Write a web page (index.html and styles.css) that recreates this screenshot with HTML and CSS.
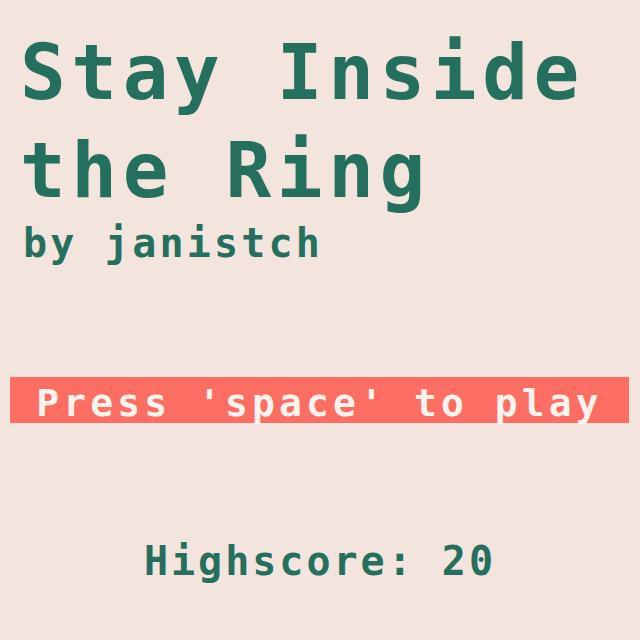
FILE: index.html
```html
<!DOCTYPE html>
<html>
<head>
<meta charset="utf-8">
<title>Stay Inside the Ring</title>
<link rel="stylesheet" href="styles.css">
</head>
<body>
<main class="page">
  <header class="intro">
    <h1 class="title">Stay Inside the Ring</h1>
    <p class="author">by janistch</p>
  </header>
  <div class="prompt">Press 'space' to play</div>
  <p class="highscore">Highscore: 20</p>
</main>
</body>
</html>
```

FILE: styles.css
```css
html, body {
  margin: 0;
  padding: 0;
  background: #f3e4dd;
}
.page {
  width: 640px;
  height: 640px;
  box-sizing: border-box;
  padding: 24px 10px 0;
  display: flex;
  flex-direction: column;
  font-family: "DejaVu Sans Mono", "Liberation Mono", monospace;
  font-weight: bold;
  color: #246f5e;
}
.intro {
  padding-left: 10px;
}
.title {
  margin: 0;
  font-size: 76px;
  line-height: 98px;
  letter-spacing: 5.6px;
  font-weight: bold;
  width: 600px;
}
.author {
  margin: 0;
  padding-left: 3px;
  font-size: 40px;
  line-height: 46px;
  letter-spacing: 3.2px;
}
.prompt {
  margin-top: 111px;
  height: 46px;
  box-sizing: border-box;
  padding-top: 3px;
  line-height: 46px;
  width: 619px;
  background: #fc6e62;
  color: #fdf3ee;
  text-align: center;
  font-size: 38px;
  letter-spacing: 4.1px;
}
.highscore {
  margin: 115px 0 0;
  text-align: center;
  font-size: 40px;
  letter-spacing: 3px;
}
```
